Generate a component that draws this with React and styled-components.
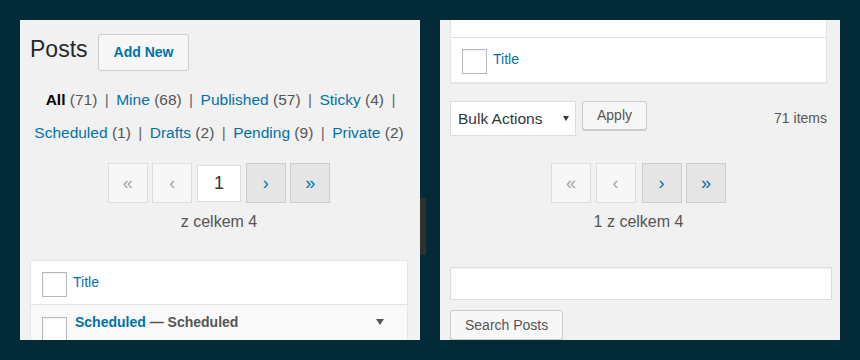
import React from 'react';
import styled, { createGlobalStyle, css } from 'styled-components';

const GlobalStyle = createGlobalStyle`
  body {
    margin: 0;
    background: #022a37;
    font-family: "Liberation Sans", Arial, sans-serif;
  }
`;

const Stage = styled.div`
  display: flex;
  width: 860px;
  height: 360px;
  padding: 20px;
  box-sizing: border-box;
`;

const Panel = styled.div`
  width: 400px;
  height: 320px;
  flex-shrink: 0;
  box-sizing: border-box;
  padding: ${({ $pad }) => $pad};
  background: #f1f1f1;
  overflow: hidden;
`;

const ScrollTrack = styled.div`
  width: 20px;
  flex-shrink: 0;
`;

const ScrollThumb = styled.div`
  width: 6px;
  height: 57px;
  margin-top: 178px;
  background: #2f3030;
`;

const TitleRow = styled.div`
  display: flex;
  align-items: flex-start;
  padding-top: 14px;
`;

const Heading = styled.h1`
  margin: 1px 10px 0 0;
  font-size: 23px;
  line-height: 29px;
  font-weight: 400;
  color: #23282d;
`;

const Button = styled.button`
  font-family: inherit;
  box-sizing: border-box;
  height: ${({ $h }) => $h || 30}px;
  padding: 0 ${({ $px }) => $px || 14}px;
  border: 1px solid #ccc;
  border-radius: 3px;
  background: #f7f7f7;
  font-size: 14px;
  line-height: ${({ $h }) => ($h || 30) - 2}px;
  color: #555;
  cursor: pointer;
  ${({ $primary }) =>
    $primary
      ? css`
          color: #0073aa;
          font-weight: 700;
        `
      : css`
          box-shadow: 0 1px 0 #ccc;
        `}
`;

const Filters = styled.ul`
  margin: 12px -6px 0;
  padding: 0;
  list-style: none;
  text-align: center;
  font-size: 15.5px;
  line-height: 33px;
  color: #666;
`;

const FilterItem = styled.li`
  display: inline;
`;

const FilterLink = styled.a`
  padding: 0 0.2em;
  color: ${({ $current }) => ($current ? '#000' : '#0073aa')};
  text-decoration: none;
  & b {
    font-weight: 700;
  }
`;

const Count = styled.span`
  color: #555;
  font-weight: 400;
`;

const PagerBlock = styled.div`
  margin: ${({ $top }) => $top}px ${({ $inset }) => $inset || 0}px 0 0;
`;

const Pager = styled.div`
  display: flex;
  justify-content: center;
  align-items: center;
  gap: 4.5px;
`;

const PageButton = styled.span`
  box-sizing: border-box;
  width: 40px;
  height: 40px;
  margin-left: ${({ $push }) => ($push ? 1.5 : 0)}px;
  display: flex;
  align-items: center;
  justify-content: center;
  font-size: 18px;
  border: 1px solid ${({ $off }) => ($off ? '#ddd' : '#ccc')};
  background: ${({ $off }) => ($off ? '#f7f7f7' : '#e5e5e5')};
  color: ${({ $off }) => ($off ? '#a0a5aa' : '#0073aa')};
`;

const PageInput = styled.span`
  box-sizing: border-box;
  width: 44.5px;
  height: 37px;
  display: flex;
  align-items: center;
  justify-content: center;
  border: 1px solid #ddd;
  background: #fff;
  font-size: 18px;
  color: #32373c;
`;

const PageInfo = styled.div`
  margin-top: 7px;
  text-align: center;
  font-size: 16px;
  line-height: 24px;
  color: #555;
`;

const Table = styled.div`
  margin: ${({ $m }) => $m};
  background: #fff;
  border: 1px solid #e5e5e5;
  border-top-width: ${({ $cut }) => ($cut ? 0 : 1)}px;
  box-shadow: 0 1px 1px rgba(0, 0, 0, 0.04);
`;

const CutRow = styled.div`
  height: 17px;
  border-bottom: 1px solid #e1e1e1;
`;

const HeadRow = styled.div`
  display: flex;
  align-items: flex-start;
  gap: 6px;
  height: 44px;
  box-sizing: border-box;
  padding: 11px 0 0 11px;
  border-bottom: ${({ $last }) => ($last ? 'none' : '1px solid #e1e1e1')};
`;

const Check = styled.span`
  box-sizing: border-box;
  width: 25px;
  height: 25px;
  flex-shrink: 0;
  margin-top: ${({ $mt }) => $mt || 0}px;
  border: 1px solid #b4b9be;
  background: #fff;
  box-shadow: inset 0 1px 2px rgba(0, 0, 0, 0.07);
`;

const ColumnLink = styled.a`
  font-size: 14px;
  line-height: 20px;
  color: #0073aa;
  text-decoration: none;
`;

const PostRow = styled.div`
  display: flex;
  align-items: flex-start;
  min-height: 60px;
  padding: 7px 23px 0 11px;
  background: #f9f9f9;
`;

const PostTitle = styled.div`
  margin-left: 8px;
  font-size: 14px;
  line-height: 20px;
  font-weight: 700;
  color: #555;
  & a {
    color: #0073aa;
    text-decoration: none;
  }
`;

const Toggle = styled.span`
  margin: 7px 0 0 auto;
  width: 0;
  height: 0;
  border-left: 4px solid transparent;
  border-right: 4px solid transparent;
  border-top: 6px solid #555;
`;

const BulkRow = styled.div`
  display: flex;
  align-items: flex-start;
  gap: 6px;
  margin: 18px 5px 0 0;
`;

const Select = styled.div`
  box-sizing: border-box;
  width: 126px;
  height: 35px;
  padding: 0 6px 0 7px;
  display: flex;
  align-items: center;
  justify-content: space-between;
  border: 1px solid #ddd;
  background: #fff;
  font-size: 15.5px;
  color: #32373c;
`;

const SelectArrow = styled.span`
  width: 0;
  height: 0;
  border-left: 3px solid transparent;
  border-right: 3px solid transparent;
  border-top: 5px solid #32373c;
`;

const ItemCount = styled.span`
  margin-left: auto;
  font-size: 14px;
  line-height: 35px;
  color: #555;
`;

const SearchBox = styled.div`
  margin-top: 33px;
  height: 33px;
  box-sizing: border-box;
  border: 1px solid #ddd;
  background: #fff;
  box-shadow: inset 0 1px 2px rgba(0, 0, 0, 0.07);
`;

const SearchActions = styled.div`
  margin-top: 10px;
`;

const filters = [
  { label: 'All', count: 71, current: true },
  { label: 'Mine', count: 68 },
  { label: 'Published', count: 57 },
  { label: 'Sticky', count: 4 },
  { label: 'Scheduled', count: 1 },
  { label: 'Drafts', count: 2 },
  { label: 'Pending', count: 9 },
  { label: 'Private', count: 2 },
];

export default function App() {
  return (
    <>
      <GlobalStyle />
      <Stage>
        <Panel $pad="0 12px 0 10px">
          <TitleRow>
            <Heading>Posts</Heading>
            <Button $primary $h={37} $px={15}>Add New</Button>
          </TitleRow>

          <Filters>
            {filters.map((f, i) => (
              <React.Fragment key={f.label}>
                <FilterItem>
                  <FilterLink $current={f.current}>
                    {f.current ? <b>{f.label}</b> : f.label} <Count>({f.count})</Count>
                  </FilterLink>
                  {i < filters.length - 1 && ' |'}
                </FilterItem>{' '}
              </React.Fragment>
            ))}
          </Filters>

          <PagerBlock $top={14}>
            <Pager>
              <PageButton $off>«</PageButton>
              <PageButton $off>‹</PageButton>
              <PageInput>1</PageInput>
              <PageButton>›</PageButton>
              <PageButton>»</PageButton>
            </Pager>
            <PageInfo>z celkem 4</PageInfo>
          </PagerBlock>

          <Table $m="26px 0 0">
            <HeadRow>
              <Check />
              <ColumnLink>Title</ColumnLink>
            </HeadRow>
            <PostRow>
              <Check $mt={5} />
              <PostTitle>
                <a>Scheduled</a> — Scheduled
              </PostTitle>
              <Toggle />
            </PostRow>
          </Table>
        </Panel>

        <ScrollTrack>
          <ScrollThumb />
        </ScrollTrack>

        <Panel $pad="0 8px 0 10px">
          <Table $cut $m="0 5px 0 0">
            <CutRow />
            <HeadRow $last>
              <Check />
              <ColumnLink>Title</ColumnLink>
            </HeadRow>
          </Table>

          <BulkRow>
            <Select>
              Bulk Actions
              <SelectArrow />
            </Select>
            <Button $h={29}>Apply</Button>
            <ItemCount>71 items</ItemCount>
          </BulkRow>

          <PagerBlock $top={27} $inset={5}>
            <Pager>
              <PageButton $off>«</PageButton>
              <PageButton $off>‹</PageButton>
              <PageButton $push>›</PageButton>
              <PageButton>»</PageButton>
            </Pager>
            <PageInfo>1 z celkem 4</PageInfo>
          </PagerBlock>

          <SearchBox />
          <SearchActions>
            <Button $h={30} $px={14}>Search Posts</Button>
          </SearchActions>
        </Panel>
      </Stage>
    </>
  );
}
